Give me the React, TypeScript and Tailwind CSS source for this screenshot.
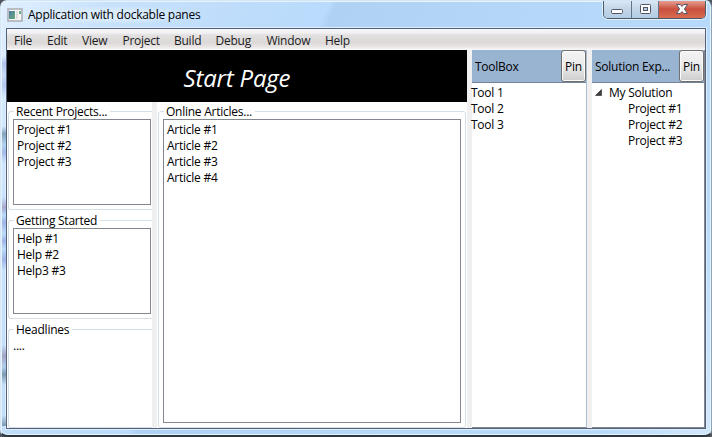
import React from 'react';

const menus = [
  { label: 'File', w: 'w-[33px]' },
  { label: 'Edit', w: 'w-[35px]' },
  { label: 'View', w: 'w-[40.5px]' },
  { label: 'Project', w: 'w-[51.5px]' },
  { label: 'Build', w: 'w-[41.5px]' },
  { label: 'Debug', w: 'w-[51px]' },
  { label: 'Window', w: 'w-[58.5px]' },
  { label: 'Help', w: 'w-[40px]' },
];

function ListBox({ items, className }: { items: string[]; className: string }) {
  return (
    <ul className={`border border-[#828790] bg-white pl-[3px] pt-[2px] ${className}`}>
      {items.map((item) => (
        <li key={item} className="h-4 leading-4">{item}</li>
      ))}
    </ul>
  );
}

function GroupBox({ title, className, children }: { title: string; className: string; children: React.ReactNode }) {
  return (
    <fieldset className={`min-w-0 rounded-[3px] border border-[#d5dfe5] pl-1 ${className}`}>
      <legend className="ml-[1px] h-[15px] whitespace-nowrap pl-[2px] pr-[3px] leading-[15px]">{title}</legend>
      {children}
    </fieldset>
  );
}

function PaneHeader({ title }: { title: string }) {
  return (
    <div className="flex h-[33px] shrink-0 border-b border-[#76849a] bg-[#99b4d1]">
      <span className="flex-1 whitespace-nowrap pl-[3px] leading-[34px]">{title}</span>
      <button className="h-8 w-[25px] shrink-0 rounded-[3px] border border-[#707070] bg-linear-to-b from-[#f3f3f3] from-0% via-[#ebebeb] via-50% to-[#cdcdcd] pt-[1px] shadow-[inset_0_0_0_1px_#fafafa]">
        Pin
      </button>
    </div>
  );
}

function CaptionButtons() {
  return (
    <div className="absolute right-[5px] top-[-1px] flex h-[19px] w-[103px] overflow-hidden rounded-b-[5px] border border-t-0 border-[#4c5969] shadow-[0_0_0_1px_#e5f3ff]">
      <div className="flex w-[28px] items-center justify-center border-r border-[#64758b] bg-linear-to-b from-[#dce9f7] from-0% via-[#c5d7e9] via-45% to-[#b4cce4] pt-[1px]">
        <svg width="13" height="14" viewBox="0 0 13 14">
          <rect x="0.5" y="6.5" width="11" height="4" rx="1" fill="#fff" stroke="#535666" />
        </svg>
      </div>
      <div className="flex w-[27px] items-center justify-center border-r border-[#64758b] bg-linear-to-b from-[#dce9f7] from-0% via-[#c5d7e9] via-45% to-[#b4cce4]">
        <svg width="13" height="14" viewBox="0 0 13 14">
          <rect x="1.5" y="2.5" width="10" height="9" rx="1" fill="#fff" stroke="#535666" />
          <rect x="4.5" y="5.5" width="4" height="3" fill="#b9cee3" stroke="#535666" />
        </svg>
      </div>
      <div className="flex flex-1 items-center justify-center bg-linear-to-b from-[#e9a69b] from-0% via-[#c9503d] via-50% to-[#d86b50]">
        <svg width="14" height="12" viewBox="0 0 14 12">
          <path d="M1.5 1.5H5.2L7 3.4L8.8 1.5H12.5L9.4 6L12.5 10.5H8.8L7 8.6L5.2 10.5H1.5L4.6 6Z" fill="#fff" stroke="#535666" strokeLinejoin="round" />
        </svg>
      </div>
    </div>
  );
}

export default function App() {
  return (
    <div className="h-[437px] w-[712px] bg-[#50565e]">
      <div className="relative flex h-[437px] w-[712px] flex-col overflow-hidden rounded-[7px] border border-b-2 border-[#d4e6f6] border-b-[#30363e] border-r-[#8fa3b6] bg-[linear-gradient(115deg,#e0efff_0%,#c8e1fb_12%,#bddcfb_28%,#badbfc_36%,#afd2f4_37%,#b5d7f8_60%,#b8dbfb_88%,#d3e8fc_100%)] px-[5px] pb-[6px] font-['Open_Sans','Noto_Sans',sans-serif] text-[12px] tracking-[-0.25px] text-black shadow-[inset_0_0_0_1px_#e5f4ff]">
        <div className="absolute left-[1px] top-[55px] h-[370px] w-[4px] bg-[linear-gradient(#d2e5fa00_0%,#b4c2ed_2%,#c8dcf7_5%,#b9c8ef_8%,#d2e5fa00_11%,#bcdcfb00_19%,#86a3bc_21%,#b3d3f2_24%,#a3bae7_26%,#bcdcfb00_29%,#bcdcfb00_38%,#a6a9cf_41%,#bcdcfb_43%,#a0b4e6_45%,#bcdcfb_48%,#a0b4e6_50%,#bcdcfb_52%,#a0b4e6_55%,#bcdcfb00_58%,#bcdcfb00_78%,#a3a4c2_81%,#b0d0ef_84%,#7d9ab2_86%,#b0d4f600_89%,#b0d4f600_97%,#7d9ab2_100%)]" />
        <div className="flex h-[27px] shrink-0 items-center">
          <svg className="ml-[1px]" width="16" height="14" viewBox="0 0 16 14">
            <rect x="1" y="1" width="14" height="12" fill="#f5f5f5" stroke="#a7abb0" strokeWidth="1.5" />
            <defs>
              <linearGradient id="appPane" x1="0" y1="0" x2="1" y2="1">
                <stop offset="0" stopColor="#4e79a5" />
                <stop offset="1" stopColor="#66ae77" />
              </linearGradient>
            </defs>
            <rect x="2" y="3" width="6" height="8" fill="url(#appPane)" />
            <rect x="9" y="3" width="2" height="8" fill="#dedede" />
            <rect x="12" y="3" width="2" height="3" fill="#6bb085" />
          </svg>
          <h1 className="ml-[5px] whitespace-nowrap bg-[radial-gradient(ellipse,#eaf5ff88_30%,transparent_72%)]">Application with dockable panes</h1>
          <CaptionButtons />
        </div>
        <main className="flex min-h-0 flex-1 flex-col border border-[#53627a] bg-white shadow-[0_0_0_1px_#dceeff]">
          <nav className="flex h-[21px] shrink-0 bg-[linear-gradient(#f8f8fb_0%,#f0eff1_20%,#e2e0e0_28%,#dcd9d8_65%,#e6e3e2_82%,#fafafa_100%)] pl-[7px] leading-[23px] text-[#1c1c1c]">
            {menus.map((m) => (
              <span key={m.label} className={`shrink-0 ${m.w}`}>{m.label}</span>
            ))}
          </nav>
          <div className="flex min-h-0 flex-1 bg-[#f0f0f0]">
            <section className="mr-[5px] flex w-[460px] flex-col bg-white">
              <div className="h-[52px] shrink-0 bg-black text-center text-[24px] italic leading-[55px] tracking-[-0.2px] text-white">Start Page</div>
              <div className="flex min-h-0 flex-1">
                <div className="flex w-[145px] flex-col gap-[3px] pl-[1px] pt-[2px]">
                  <GroupBox title="Recent Projects..." className="h-[106px] rounded-r-none border-r-0">
                    <ListBox items={['Project #1', 'Project #2', 'Project #3']} className="h-[86px] w-[138px]" />
                  </GroupBox>
                  <GroupBox title="Getting Started" className="h-[106px] rounded-r-none border-r-0">
                    <ListBox items={['Help #1', 'Help #2', 'Help3 #3']} className="h-[86px] w-[138px]" />
                  </GroupBox>
                  <GroupBox title="Headlines" className="h-[106px] rounded-r-none border-r-0">
                    <p className="pt-[1px] leading-4">....</p>
                  </GroupBox>
                </div>
                <div className="w-[5px] bg-[#f0f0f0]" />
                <div className="flex-1 pl-[1px] pr-[1px] pt-[2px]">
                  <GroupBox title="Online Articles..." className="h-[324px]">
                    <ListBox items={['Article #1', 'Article #2', 'Article #3', 'Article #4']} className="h-[304px] w-[298px]" />
                  </GroupBox>
                </div>
              </div>
            </section>
            <aside className="mr-[5px] flex w-[115px] flex-col border-b border-r border-b-[#828790] border-r-[#abbccd] bg-white">
              <PaneHeader title="ToolBox" />
              <ul className="-ml-[1px] pt-[2px] leading-4">
                <li>Tool 1</li>
                <li>Tool 2</li>
                <li>Tool 3</li>
              </ul>
            </aside>
            <aside className="flex min-w-0 flex-1 flex-col border-b border-r border-[#828790] bg-white">
              <PaneHeader title="Solution Exp..." />
              <div className="pl-[3px] pt-[2px] leading-4">
                <div className="flex h-4 items-center">
                  <svg className="-mt-[2px]" width="7" height="7" viewBox="0 0 7 7">
                    <path d="M6.5 0.5V6.5H0.5Z" fill="#404040" stroke="#262626" strokeWidth="0.6" />
                  </svg>
                  <span className="ml-[7px]">My Solution</span>
                </div>
                <ul className="pl-[33px]">
                  <li>Project #1</li>
                  <li>Project #2</li>
                  <li>Project #3</li>
                </ul>
              </div>
            </aside>
          </div>
        </main>
      </div>
    </div>
  );
}
